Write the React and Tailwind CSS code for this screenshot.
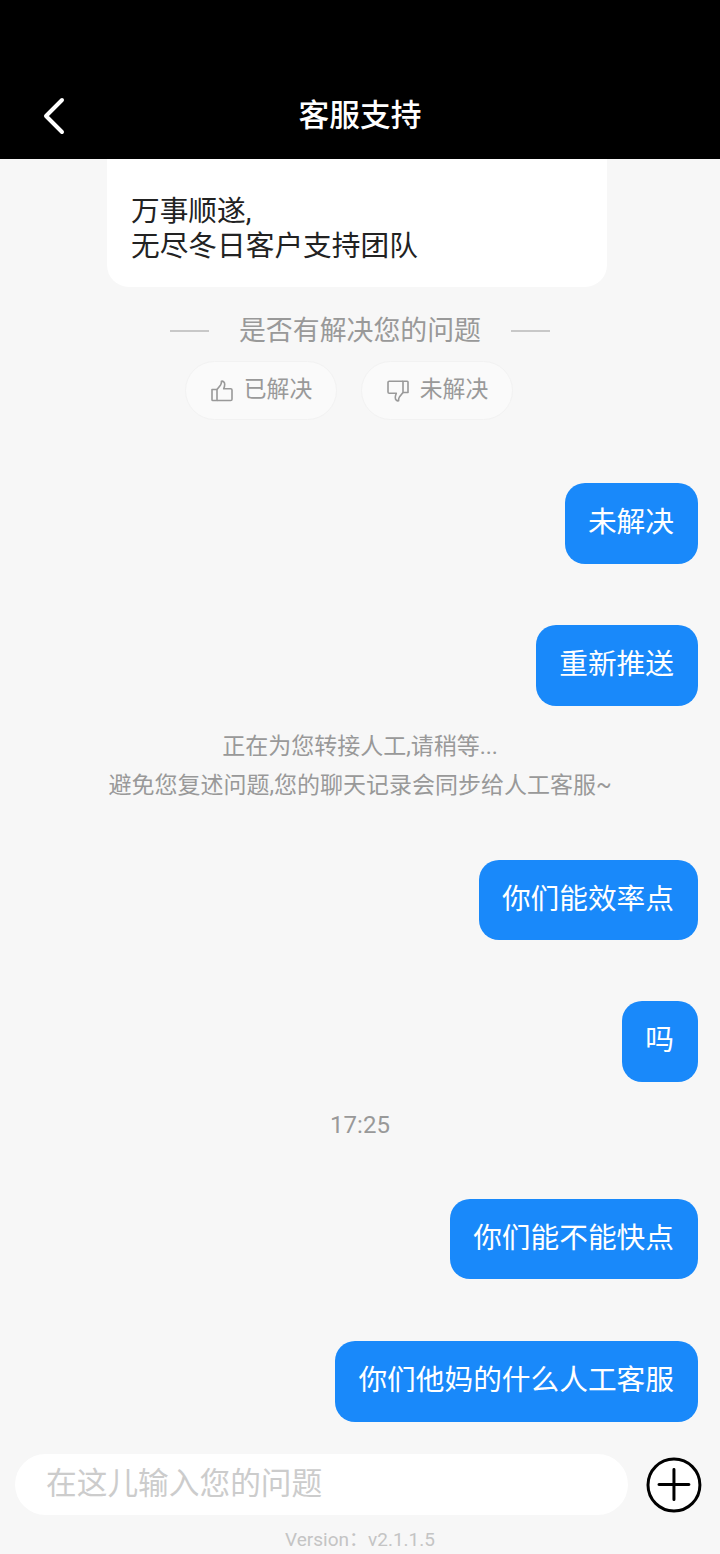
const FONT = "font-['Roboto','Noto_Sans_CJK_SC',sans-serif]"

function Bubble({ text, className = '' }) {
  return (
    <div className={`self-end h-[80.5px] flex items-center pl-[23px] pr-6 pb-[1px] rounded-[20px] bg-[#1989fa] text-white text-[28.7px] leading-none ${className}`}>
      {text}
    </div>
  )
}

function ThumbUp() {
  return (
    <svg width="24" height="24" viewBox="0 0 24 24" fill="none" stroke="#999" strokeWidth="1.6" strokeLinejoin="round">
      <path d="M2 10.5h5v11H2.8a.8.8 0 0 1-.8-.8z" />
      <path d="M7 10.5l3.6-4.6c.5-.8.8-1.6.8-2.6V2.2c1.8-.4 3.3 1 3.3 3 0 1.400-.4 3-1 4.500h7a1.300 1.300 0 0 1 1.300 1.300v9.200a1.300 1.300 0 0 1-1.300 1.300H7" />
    </svg>
  )
}

function ThumbDown() {
  return (
    <svg width="24" height="24" viewBox="0 0 24 24" fill="none" stroke="#999" strokeWidth="1.6" strokeLinejoin="round">
      <path d="M17 13.500h5V3a.8.8 0 0 0-.8-.8H17z" />
      <path d="M17 13.500l-3.600 4.600c-.5.8-.8 1.600-.8 2.600v1.100c-1.800.4-3.300-1-3.300-3 0-1.400.4-3 1-4.500H3.300A1.300 1.300 0 0 1 2 13V3.500a1.300 1.300 0 0 1 1.300-1.300H17" />
    </svg>
  )
}

function Feedback({ icon, label }) {
  return (
    <div className="w-[152px] h-[59px] flex items-center justify-center gap-[10px] rounded-full bg-[#fafafa] border border-[#f2f2f2] text-[#999999] text-[22.8px]">
      {icon}
      <span>{label}</span>
    </div>
  )
}

export default function App() {
  return (
    <div className={`w-[720px] h-[1554px] flex flex-col overflow-hidden bg-[#f7f7f7] ${FONT}`}>
      <header className="relative h-[159px] shrink-0 bg-black flex items-end justify-center pb-[21px]">
        <svg className="absolute left-[42px] top-[97px]" width="24" height="38" viewBox="0 0 24 38" fill="none" stroke="white" strokeWidth="4" strokeLinecap="round" strokeLinejoin="round">
          <path d="M20 3L4 19l16 16" />
        </svg>
        <h1 className="text-white text-[30.700px] leading-[44px] font-medium">客服支持</h1>
      </header>

      <main className="flex-1 flex flex-col px-[22px]">
        <div className="w-[500px] h-[128px] ml-[85px] rounded-b-[22px] bg-white pl-6 pt-[35px] text-[#222222] text-[28.7px] leading-[35px]">
          <p>万事顺遂,</p>
          <p>无尽冬日客户支持团队</p>
        </div>

        <div className="mt-[25px] h-[38px] flex items-center justify-center gap-[30px] text-[#999999] text-[26.9px]">
          <span className="w-[39px] h-[2px] bg-[#c8c8c8]" />
          <span>是否有解决您的问题</span>
          <span className="w-[39px] h-[2px] bg-[#c8c8c8]" />
        </div>

        <div className="mt-[11px] ml-[163px] flex gap-[24px]">
          <Feedback icon={<ThumbUp />} label="已解决" />
          <Feedback icon={<ThumbDown />} label="未解决" />
        </div>

        <Bubble text="未解决" className="mt-[63px]" />
        <Bubble text="重新推送" className="mt-[61.500px]" />

        <div className="mt-[21px] text-center text-[#999999] text-[23px] leading-[39px]">
          <p>正在为您转接人工,请稍等...</p>
          <p>避免您复述问题,您的聊天记录会同步给人工客服~</p>
        </div>

        <Bubble text="你们能效率点" className="mt-[55px]" />
        <Bubble text="吗" className="mt-[61px]" />

        <p className="mt-[25px] h-[36px] text-center text-[#999999] text-[24px] leading-[36px]">17:25</p>

        <Bubble text="你们能不能快点" className="mt-[56px]" />
        <Bubble text="你们他妈的什么人工客服" className="mt-[62px]" />
      </main>

      <div className="shrink-0 flex items-center pl-[15px] pr-[18px]">
        <div className="w-[614px] h-[61px] flex items-center pl-[31px] pb-[1px] rounded-full bg-white text-[#cccccc] text-[30.7px]">
          在这儿输入您的问题
        </div>
        <svg className="ml-[18px]" width="56" height="56" viewBox="0 0 56 56" fill="none" stroke="black" strokeLinecap="round">
          <circle cx="28" cy="28" r="26" fill="white" strokeWidth="3" />
          <path d="M13 27.500h30M28 12.500v30" strokeWidth="3" />
        </svg>
      </div>
      <p className="h-[39px] shrink-0 pt-[10px] text-center text-[#c4c4c4] text-[19px] leading-[30px]">{'Version\uFF1Av2.1.1.5'}</p>
    </div>
  )
}
